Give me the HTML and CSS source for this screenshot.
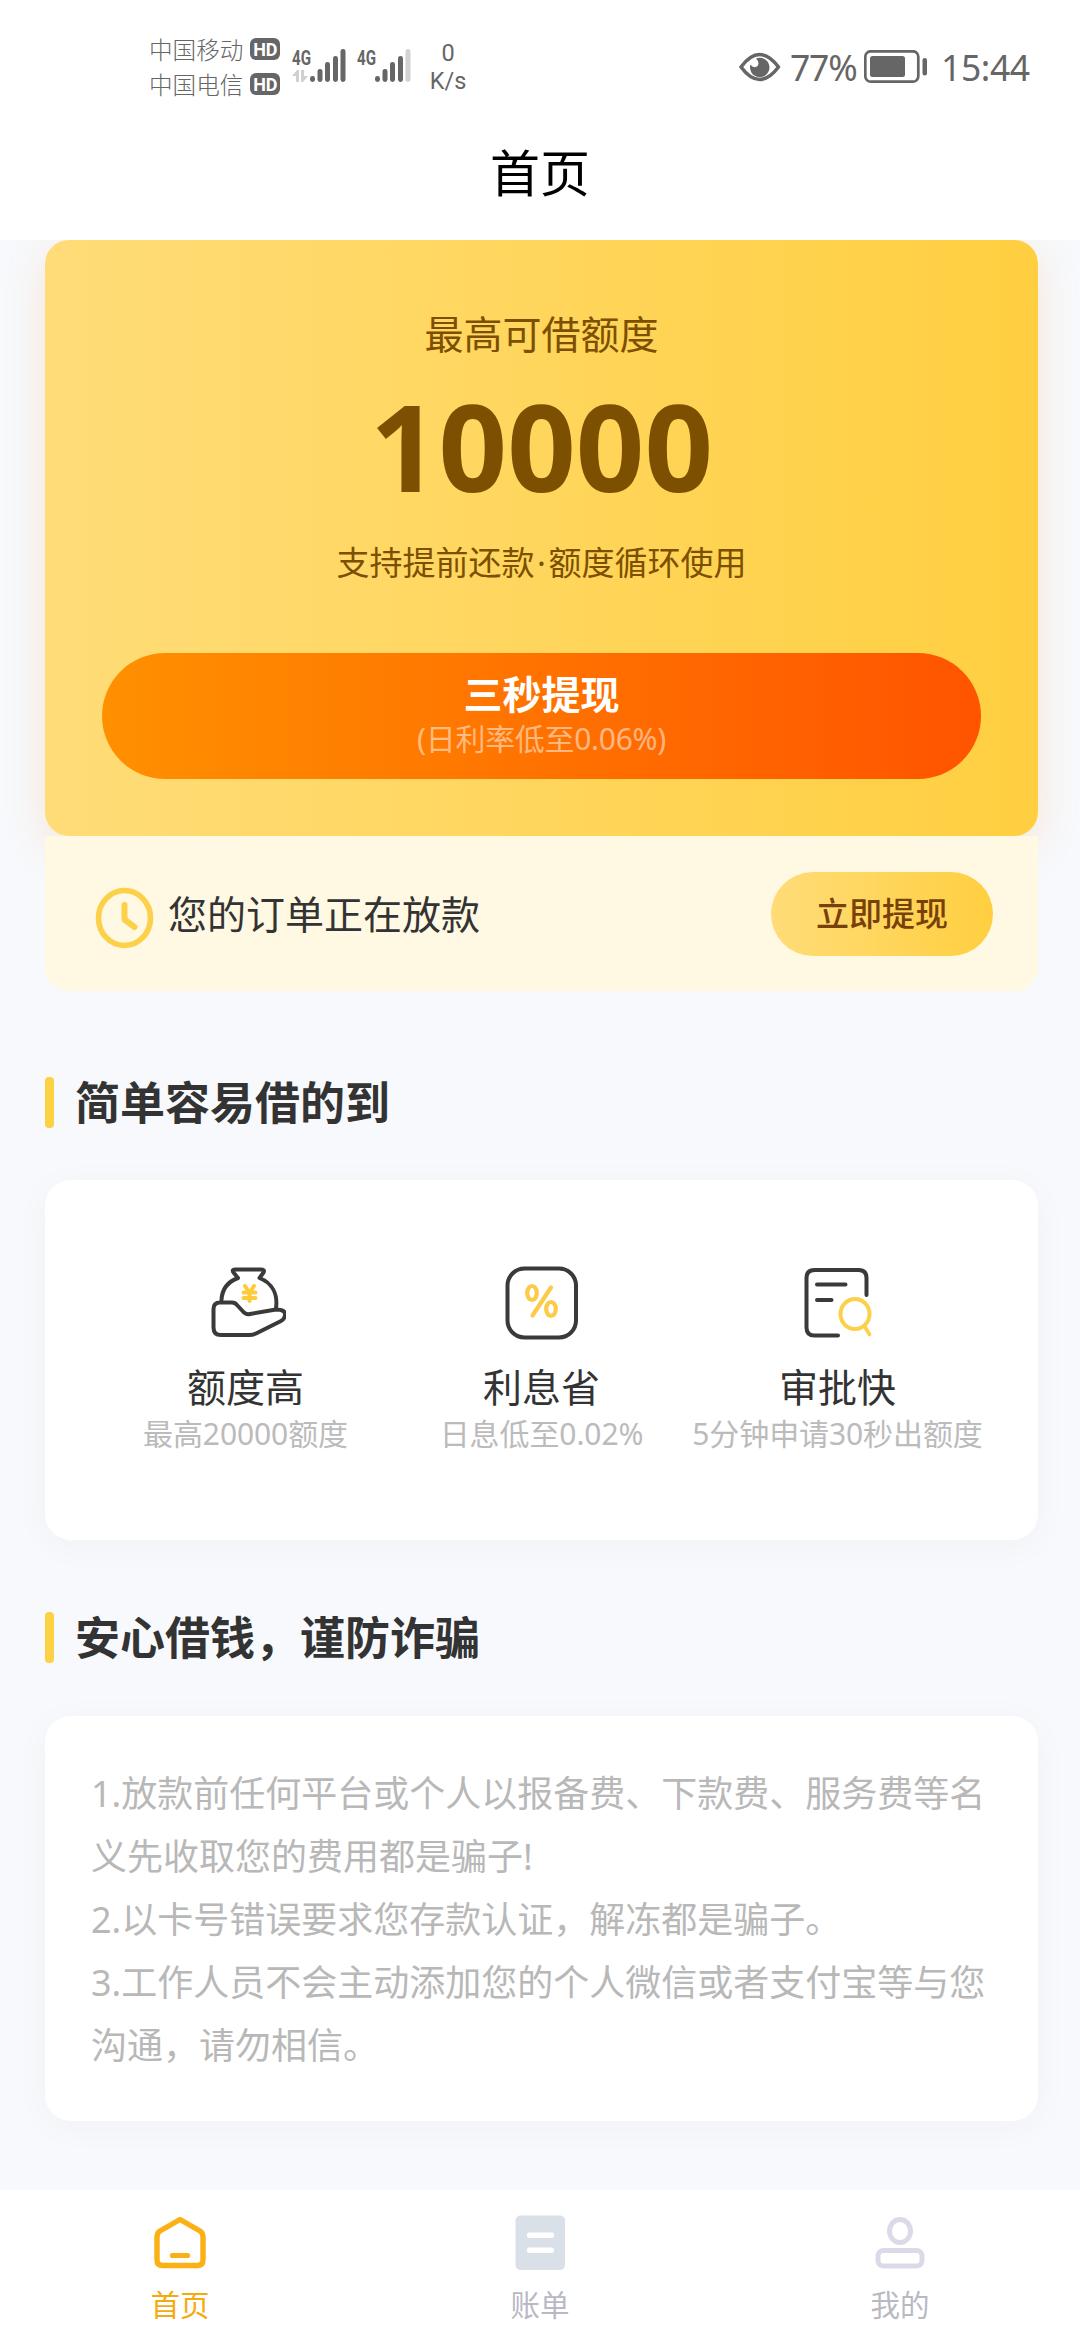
FILE: index.html
```html
<!DOCTYPE html>
<html lang="zh-CN">
<head>
<meta charset="utf-8">
<title>首页</title>
<link rel="stylesheet" href="styles.css">
</head>
<body>
<div class="app">
  <div class="status">
    <div class="carriers">
      <div class="carrier">中国移动<span class="hd">HD</span></div>
      <div class="carrier">中国电信<span class="hd">HD</span></div>
    </div>
    <svg class="signals" width="122" height="40" viewBox="0 0 122 40">
      <g fill="#666">
        <text class="net" x="0" y="20" textLength="19" lengthAdjust="spacingAndGlyphs">4G</text>
        <text class="net" x="65" y="20" textLength="19" lengthAdjust="spacingAndGlyphs">4G</text>
        <rect x="18" y="31" width="5" height="6" rx="2.4"/><rect x="25.500" y="24" width="5" height="13" rx="2.400"/><rect x="33" y="17" width="5" height="20" rx="2.400"/><rect x="41" y="11" width="5" height="26" rx="2.400"/><rect x="48.500" y="4" width="5" height="33" rx="2.400"/>
        <rect x="83" y="31" width="5" height="6" rx="2.400"/><rect x="90.500" y="24" width="5" height="13" rx="2.400"/><rect x="98" y="17" width="5" height="20" rx="2.400"/><rect x="106" y="11" width="5" height="26" rx="2.400"/>
      </g>
      <rect x="113.500" y="4" width="5" height="33" rx="2.400" fill="#d2d2d2"/>
      <path d="M0 31l5-6h2v12H4v-6zM9 25h3v6h4l-5 6H9z" fill="#d0d0d0"/>
    </svg>
    <div class="speed"><span>0</span><span>K/s</span></div>
    <svg class="eye" width="42" height="30" viewBox="0 0 42 30">
      <path d="M2 15Q20.500-10 39.500 15Q20.500 40 2 15z" fill="none" stroke="#666" stroke-width="3.600" stroke-linejoin="round"/>
      <path d="M17 6.500A9.700 9.700 0 1 1 11.500 12.500Q14 16.500 18 14.500Q21.500 11 17 6.500z" fill="#666"/>
    </svg>
    <span class="percent">77%</span>
    <svg class="battery" width="64" height="34" viewBox="0 0 64 34">
      <rect x="1.300" y="1.300" width="53" height="30.400" rx="5.500" fill="none" stroke="#666" stroke-width="2.700"/>
      <rect x="6" y="6" width="35" height="21" rx="2.500" fill="#666"/>
      <rect x="58.500" y="8" width="4.500" height="17.500" rx="2.200" fill="#666"/>
    </svg>
    <span class="clock">15:44</span>
  </div>
  <header class="header">首页</header>

  <main class="content">
    <section class="quota">
      <div class="quota-label">最高可借额度</div>
      <div class="quota-amount">10000</div>
      <div class="quota-note"><span>支持提前还款</span><span class="dot">·</span><span>额度循环使用</span></div>
      <div class="cta">
        <div class="cta-title">三秒提现</div>
        <div class="cta-note">(日利率低至0.06%)</div>
      </div>
    </section>
    <section class="order">
      <svg class="order-icon" width="60" height="64" viewBox="0 0 60 64">
        <ellipse cx="29.500" cy="32" rx="26" ry="27.500" fill="none" stroke="#fdd04a" stroke-width="5.600"/>
        <path d="M29.500 19v14.500l10 7.500" fill="none" stroke="#fdd04a" stroke-width="6" stroke-linecap="round" stroke-linejoin="round"/>
      </svg>
      <span class="order-text">您的订单正在放款</span>
      <div class="order-button">立即提现</div>
    </section>

    <h2 class="section-title first">简单容易借的到</h2>
    <section class="card features">
      <div class="feature">
        <svg width="80" height="80" viewBox="0 0 80 80" fill="none" stroke="#3a3a3a" stroke-width="4" stroke-linejoin="round" stroke-linecap="round">
          <path d="M15.500 37C16 27 21 19 32 15L27.500 9.500Q25.500 6.500 29 6.500H55.500Q59 6.500 57.500 9.500L53.500 15C66 20 72 31 70 45.500"/>
          <path d="M7.500 46Q7.500 39.500 14 39.500H26Q29 39.500 31 42L37 48.500Q40 52 44 51L70 46.500Q80 46.500 79 52.500Q78.500 56 75 58L50 70.500Q47 72 43 72H15Q7.500 72 7.500 64.500z" fill="#fff"/>
          <path d="M39 23l4.500 7 4.500-7M37.500 29.500h12M37.500 35h12M43.500 29v9" stroke="#fdcb3c"/>
        </svg>
        <div class="feature-name">额度高</div>
        <div class="feature-note">最高20000额度</div>
      </div>
      <div class="feature">
        <svg width="80" height="80" viewBox="0 0 80 80">
          <rect x="5.500" y="5.500" width="68.500" height="69" rx="17" fill="none" stroke="#3a3a3a" stroke-width="4"/>
          <g fill="none" stroke="#fdcb4a" stroke-width="4.200" stroke-linecap="round"><ellipse cx="30" cy="30" rx="4.800" ry="7"/><ellipse cx="49" cy="46" rx="4.800" ry="7"/><path d="M49 24.500L30.500 52.500"/></g>
        </svg>
        <div class="feature-name">利息省</div>
        <div class="feature-note">日息低至0.02%</div>
      </div>
      <div class="feature">
        <svg width="80" height="80" viewBox="0 0 80 80" fill="none" stroke="#3a3a3a" stroke-width="4" stroke-linecap="round">
          <path d="M68.500 32V15Q68.500 7 60.500 7H16.500Q8.500 7 8.500 15V64.500Q8.500 72.500 16.500 72.500H40M19 21.500H47.500M19 37H33.500"/>
          <g stroke="#fdd04a"><ellipse cx="57" cy="51" rx="14.500" ry="15"/><path d="M67 64l4.500 7.500" stroke-width="3.700"/></g>
        </svg>
        <div class="feature-name">审批快</div>
        <div class="feature-note">5分钟申请30秒出额度</div>
      </div>
    </section>

    <h2 class="section-title">安心借钱，谨防诈骗</h2>
    <section class="card tips">
      <p>1.放款前任何平台或个人以报备费、下款费、服务费等名义先收取您的费用都是骗子!</p>
      <p>2.以卡号错误要求您存款认证，解冻都是骗子。</p>
      <p>3.工作人员不会主动添加您的个人微信或者支付宝等与您沟通，请勿相信。</p>
    </section>
  </main>

  <nav class="tabs">
    <div class="tab active">
      <svg width="60" height="60" viewBox="0 0 60 60" fill="none" stroke="#fbb014" stroke-width="5.400" stroke-linejoin="round" stroke-linecap="round">
        <path d="M30 6.500L50 18Q53 20 53 24V47Q53 52.500 47.500 52.500H12.500Q7 52.500 7 47V24Q7 20 10 18z"/>
        <path d="M22.500 42.500h15" stroke-width="5.200"/>
      </svg>
      <span>首页</span>
    </div>
    <div class="tab">
      <svg width="60" height="60" viewBox="0 0 60 60">
        <rect x="5.500" y="2.500" width="49.500" height="54.500" rx="5" fill="#dae0e8"/>
        <rect x="17" y="19.500" width="27" height="5.500" rx="2" fill="#fff"/><rect x="17" y="34.500" width="27" height="5.500" rx="2" fill="#fff"/>
      </svg>
      <span>账单</span>
    </div>
    <div class="tab">
      <svg width="60" height="60" viewBox="0 0 60 60" fill="none" stroke="#dcdae8" stroke-width="5">
        <ellipse cx="30" cy="18" rx="10.500" ry="11.500"/>
        <rect x="8" y="37.500" width="44" height="15.500" rx="5.500"/>
      </svg>
      <span>我的</span>
    </div>
  </nav>
</div>
</body>
</html>
```
FILE: styles.css
```css
* { box-sizing: border-box; }

body {
  margin: 0;
  background: #f7f9fc;
  font-family: "Noto Sans", "Noto Sans CJK SC", sans-serif;
  color: #333;
}

h2, p { margin: 0; }
svg { display: block; flex: none; }

.app {
  width: 1080px;
  height: 2340px;
  display: flex;
  flex-direction: column;
  overflow: hidden;
}

/* Status bar */
.status {
  height: 108px;
  flex: none;
  display: flex;
  align-items: flex-start;
  padding: 31px 0 0 149px;
  background: #fff;
  color: #666;
}

.carriers { width: 143px; }

.carrier {
  display: flex;
  align-items: center;
  gap: 7px;
  height: 35px;
  font-family: "Noto Sans CJK SC", sans-serif;
  font-size: 23.6px;
  font-weight: 300;
}

.hd {
  width: 30px;
  height: 22px;
  border-radius: 6px;
  background: #666;
  color: #fff;
  font: 700 18px/23px "Roboto", sans-serif;
  text-align: center;
}

.signals { margin-top: 14px; }
.net { font: 700 20px "Roboto", sans-serif; }

.speed {
  width: 66px;
  display: flex;
  flex-direction: column;
  align-items: center;
  margin: 8px 0 0 1px;
  font: 400 23.5px/28px "Roboto", sans-serif;
}

.eye { margin: 21px 0 0 258px; }

.percent, .clock {
  font-size: 35.5px;
  font-weight: 400;
  line-height: 48px;
  margin-top: 12px;
  white-space: nowrap;
}

.percent { margin-left: 9px; width: 74px; letter-spacing: -1.2px; }
.battery { margin-top: 19px; }
.clock { margin-left: 13px; letter-spacing: -0.4px; }

.header {
  height: 132px;
  flex: none;
  background: #fff;
  color: #000;
  font-size: 50px;
  line-height: 131px;
  text-align: center;
}

/* Scrolling content */
.content {
  flex: 1;
  min-height: 0;
  overflow: hidden;
  padding: 0 42px 0 45px;
}

.quota {
  height: 596px;
  padding: 67px 57px 0;
  border-radius: 24px;
  background: linear-gradient(90deg, #ffdc78, #ffcf40);
  box-shadow: 0 12px 42px rgba(255, 150, 60, .2);
  color: #7d4f00;
  text-align: center;
}

.quota-label { height: 54px; font-size: 39px; line-height: 54px; }

.quota-amount {
  height: 130px;
  margin-top: 20px;
  font-size: 120px;
  font-weight: 700;
  line-height: 130px;
}

.quota-note {
  display: flex;
  justify-content: center;
  height: 48px;
  margin-top: 28px;
  font-size: 33px;
  line-height: 48px;
}

.dot { width: 14px; }

.cta {
  height: 126px;
  margin-top: 66px;
  padding-top: 16px;
  border-radius: 63px;
  background: linear-gradient(90deg, #ff9000, #ff5400);
}

.cta-title { height: 50px; color: #fff; font-size: 39px; font-weight: 700; line-height: 50px; }

.cta-note {
  height: 40px;
  color: rgba(255, 255, 255, .5);
  font-size: 30px;
  line-height: 40px;
  letter-spacing: -0.3px;
}

.order {
  position: relative;
  height: 155px;
  display: flex;
  align-items: center;
  padding: 0 45px 0 50px;
  border-radius: 0 0 24px 24px;
  background: #fff8e3;
}

.order-icon { margin-top: 9px; }
.order-text { margin-left: 13px; font-size: 39px; line-height: 54px; }

.order-button {
  width: 222px;
  height: 84px;
  margin-left: auto;
  border-radius: 42px;
  background: linear-gradient(90deg, #ffdc78, #ffcf40);
  color: #78410a;
  font-size: 33px;
  font-weight: 500;
  line-height: 84px;
  text-align: center;
}

.section-title {
  display: flex;
  align-items: center;
  gap: 21px;
  height: 51px;
  margin: 72px 0 53px;
  font-size: 45px;
  font-weight: 700;
  line-height: 51px;
}

.section-title.first { margin: 86px 0 52px; }

.section-title::before {
  content: "";
  width: 9px;
  height: 51px;
  border-radius: 4px;
  background: #fdd144;
}

.card {
  border-radius: 26px;
  background: #fff;
  box-shadow: 0 6px 36px rgba(60, 60, 60, .035);
}

.features {
  height: 360px;
  display: grid;
  grid-template-columns: repeat(3, 296px);
  justify-content: center;
  padding-top: 83px;
}

.feature { display: flex; flex-direction: column; align-items: center; }
.feature-name { height: 54px; margin-top: 17px; font-size: 39px; line-height: 54px; }

.feature-note {
  height: 40px;
  color: #bbb;
  font-size: 30px;
  line-height: 40px;
  letter-spacing: -0.1px;
  white-space: nowrap;
}

.tips {
  height: 405px;
  padding: 46px 42px 0 46px;
  color: #b8b8b8;
  font-size: 36px;
  line-height: 63px;
}

/* Bottom tab bar */
.tabs {
  position: relative;
  height: 150px;
  flex: none;
  display: grid;
  grid-template-columns: repeat(3, 1fr);
  background: #fff;
}

.tab {
  display: flex;
  flex-direction: column;
  align-items: center;
  padding-top: 23px;
  color: #b9b9c5;
  font-size: 29.5px;
  line-height: 40px;
}

.tab span { margin-top: 12px; }
.tab.active { color: #f5ab10; }
```
